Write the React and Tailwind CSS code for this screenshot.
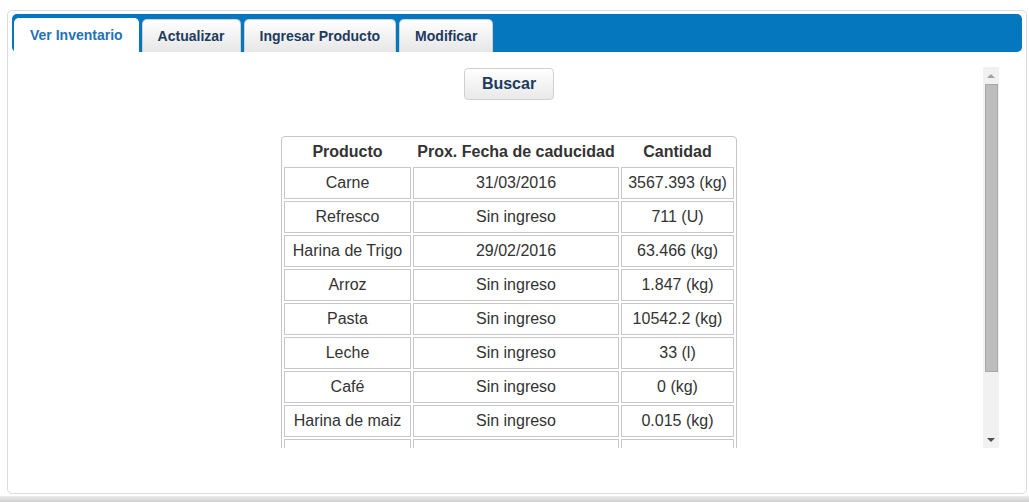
import React from "react";

const rows = [
  ["Carne", "31/03/2016", "3567.393 (kg)"],
  ["Refresco", "Sin ingreso", "711 (U)"],
  ["Harina de Trigo", "29/02/2016", "63.466 (kg)"],
  ["Arroz", "Sin ingreso", "1.847 (kg)"],
  ["Pasta", "Sin ingreso", "10542.2 (kg)"],
  ["Leche", "Sin ingreso", "33 (l)"],
  ["Café", "Sin ingreso", "0 (kg)"],
  ["Harina de maiz", "Sin ingreso", "0.015 (kg)"],
  ["", "", ""],
];

const tabs = ["Ver Inventario", "Actualizar", "Ingresar Producto", "Modificar"];

const Tab = ({ label, active }) => (
  <div
    className={`px-[15px] flex items-center rounded-t-[5px] border border-b-0 text-[14px] font-bold ${
      active
        ? "h-[34px] bg-white border-white text-[#2272b5]"
        : "h-[33px] bg-gradient-to-b from-white to-[#e6e6e6] border-[#d0d0d0] text-[#1d3b5e]"
    }`}
  >
    {label}
  </div>
);

const Scrollbar = () => (
  <div className="w-[16px] h-full bg-[#f1f1f1] flex flex-col shrink-0">
    <div className="h-[17px] flex items-center justify-center">
      <div className="w-0 h-0 border-l-[4px] border-r-[4px] border-b-[4px] border-l-transparent border-r-transparent border-b-[#a3a3a3]" />
    </div>
    <div className="ml-[2px] mr-[1px] h-[288px] bg-[#bdbdbd] border border-[#a8a8a8]" />
    <div className="flex-1" />
    <div className="h-[17px] flex items-center justify-center">
      <div className="w-0 h-0 border-l-[4px] border-r-[4px] border-t-[4px] border-l-transparent border-r-transparent border-t-[#505050]" />
    </div>
  </div>
);

export default function App() {
  return (
    <div className="w-[1029px] h-[502px] bg-white font-['Liberation_Sans',Arial,sans-serif] flex flex-col overflow-hidden">
      <div className="mt-[10px] ml-[7px] w-[1020px] h-[484px] shrink-0 border border-[#dcdcdc] rounded-[5px] px-[4px] pt-[3px] flex flex-col">
        <div className="h-[38px] shrink-0 bg-[#0477bf] rounded-[5px] flex items-end gap-[3px] pl-[2px]">
          {tabs.map((t, i) => (
            <Tab key={t} label={t} active={i === 0} />
          ))}
        </div>

        <div className="flex mt-[15px] pr-[23px] h-[381px] shrink-0">
          <div className="flex-1 overflow-hidden flex flex-col items-center pl-[23px]">
            <button className="shrink-0 mt-[1px] h-[32px] px-[17px] rounded-[4px] border border-[#d0d0d0] bg-gradient-to-b from-white to-[#e9e9e9] text-[16px] font-bold text-[#1d3b5e]">
              Buscar
            </button>

            <table className="shrink-0 mt-[36px] border-separate border-spacing-[2px] border border-[#c6c6c6] rounded-[4px] text-[16px] text-[#333]">
              <thead>
                <tr>
                  <th className="h-[26px] font-bold">Producto</th>
                  <th className="h-[26px] font-bold">Prox. Fecha de caducidad</th>
                  <th className="h-[26px] font-bold">Cantidad</th>
                </tr>
              </thead>
              <tbody>
                {rows.map((r, i) => (
                  <tr key={i}>
                    <td className="w-[127px] h-[32px] border border-[#c8c8c8] text-center p-0">{r[0]}</td>
                    <td className="w-[206px] h-[32px] border border-[#c8c8c8] text-center p-0">{r[1]}</td>
                    <td className="w-[113px] h-[32px] border border-[#c8c8c8] text-center p-0">{r[2]}</td>
                  </tr>
                ))}
              </tbody>
            </table>
          </div>
          <Scrollbar />
        </div>
      </div>
      <div className="mt-[2px] h-[6px] shrink-0 bg-gradient-to-b from-[#ececec] to-[#cfcfcf]" />
    </div>
  );
}
